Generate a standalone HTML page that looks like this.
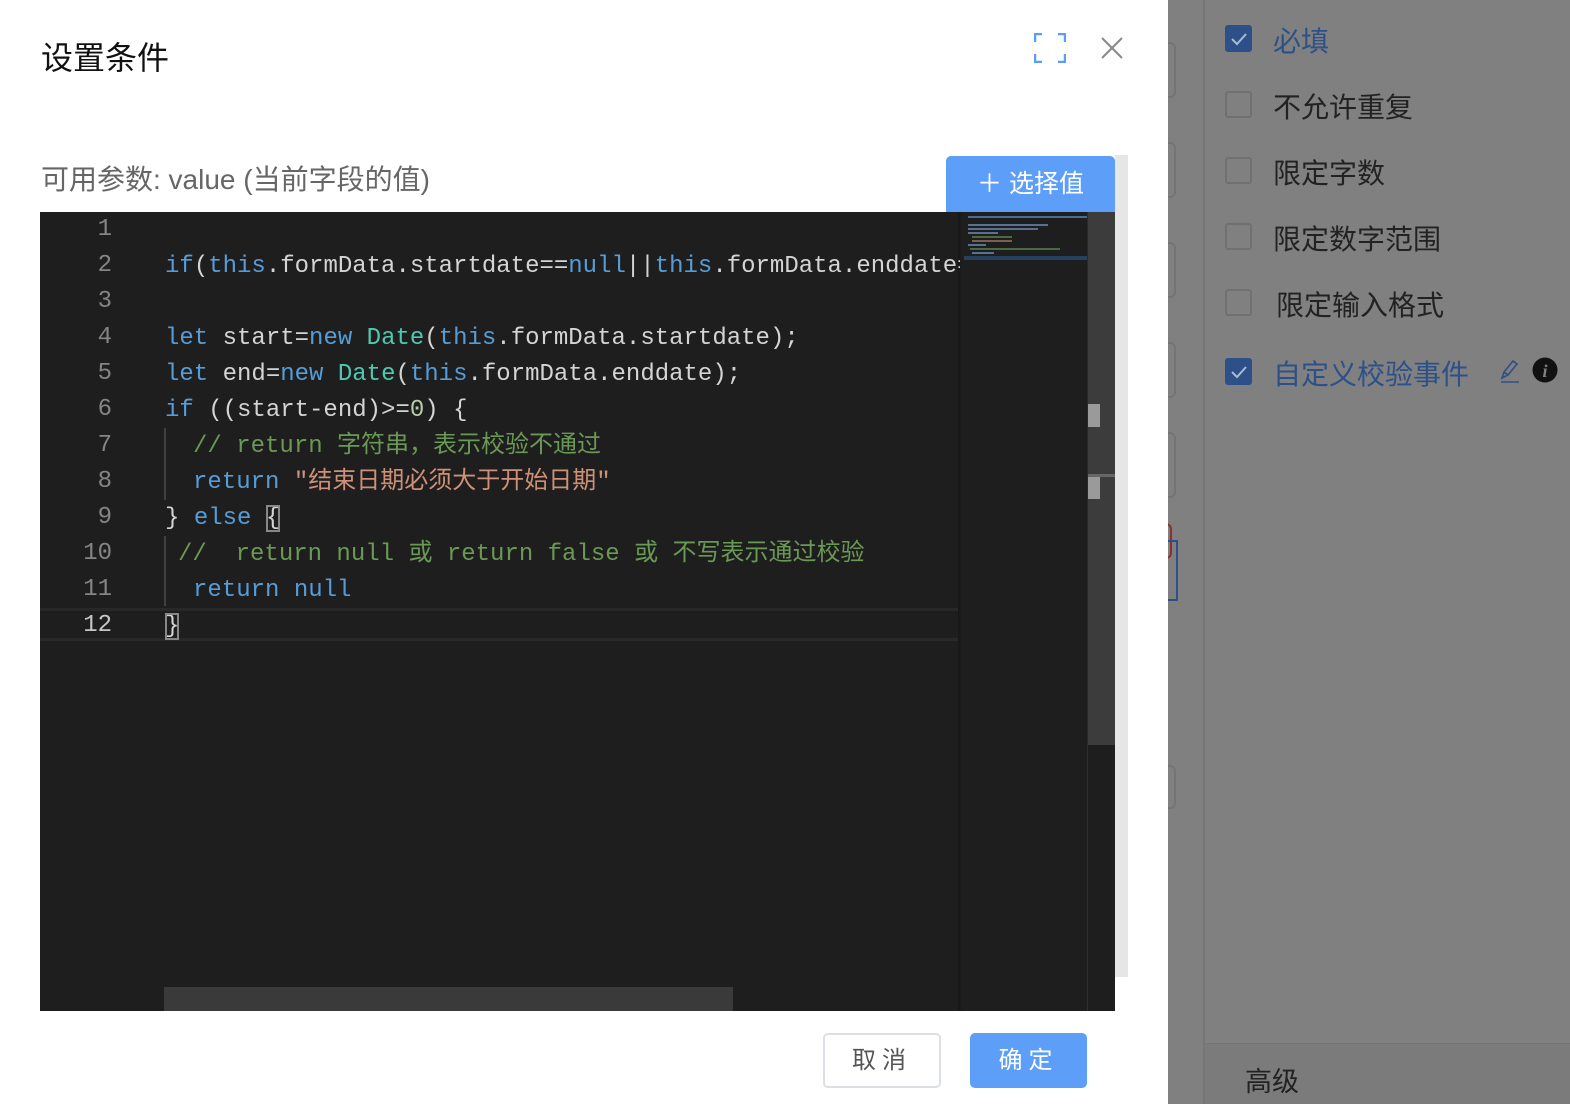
<!DOCTYPE html>
<html><head><meta charset="utf-8"><style>
*{margin:0;padding:0;box-sizing:border-box}
body{width:1570px;height:1104px;overflow:hidden;background:#fff;position:relative;font-family:"Liberation Sans","Noto Sans CJK SC",sans-serif}
.abs{position:absolute}
.code{font-family:"Liberation Mono","Noto Sans CJK SC",monospace;font-size:24px;line-height:36px;white-space:pre;color:#d4d4d4}
.ln{position:absolute;left:40px;width:72px;text-align:right;font-family:"Liberation Mono",monospace;font-size:24px;line-height:36px;color:#858585}
.kw{color:#569cd6}.ty{color:#4ec9b0}.cm{color:#6a9955}.st{color:#ce9178}.nu{color:#b5cea8}
.cb{position:absolute;left:1225px;width:27px;height:27px;border-radius:3px;border:2px solid #707070}
.cb.on{background:#2d5088;border-color:#2d5088}
.lab{position:absolute;left:1273px;font-size:28px;color:#222;font-family:"Liberation Sans","Noto Sans CJK SC",sans-serif}
.inp{position:absolute;left:-18px;width:26px;border:2px solid #747474;border-radius:6px}
</style></head><body>
<div class="abs" style="left:41px;top:33px;font-size:32px;color:#111">设置条件</div>
<svg class="abs" style="left:1034px;top:33px" width="32" height="30" viewBox="0 0 32 30" fill="none" stroke="#5a9cf8" stroke-width="2.5"><path d="M1 9V1h7M24 1h7v8M31 21v8h-7M8 29H1v-8"/></svg>
<svg class="abs" style="left:1101px;top:37px" width="22" height="22" viewBox="0 0 22 22" stroke="#888" stroke-width="2"><path d="M1 1L21 21M21 1L1 21"/></svg>
<div class="abs" style="left:41px;top:158px;font-size:28px;color:#666">可用参数: value (当前字段的值)</div>
<div class="abs" style="left:1115px;top:155px;width:13px;height:822px;background:#e6e6e6"></div>
<div class="abs" style="left:946px;top:156px;width:169px;height:56px;background:#5c9ef8;border-radius:5px 5px 0 0;color:#fff;font-size:25px;line-height:56px;text-align:center">＋ 选择值</div>
<!-- editor -->
<div class="abs" style="left:40px;top:212px;width:1075px;height:799px;background:#1e1e1e;overflow:hidden">
 <div class="abs" style="left:0;top:396px;width:920px;height:33px;border-top:3px solid #282828;border-bottom:3px solid #282828"></div>
 <div class="abs" style="left:124px;top:324px;width:2px;height:70px;background:#404040"></div>
 <div class="abs" style="left:124px;top:216px;width:2px;height:72px;background:#404040"></div>
 <div class="abs" style="left:124px;top:775px;width:569px;height:24px;background:#3a3a3a"></div>
 <div class="abs" style="left:918px;top:0;width:4px;height:799px;background:linear-gradient(90deg,#161616,#1e1e1e)"></div>
 <div class="abs" style="left:1047px;top:0;width:28px;height:533px;background:#3c3c3c;border-left:1px solid #2a2a2a"></div>
 <div class="abs" style="left:1047px;top:533px;width:1px;height:266px;background:#2e2e2e"></div>
 <div class="abs" style="left:1048px;top:192px;width:12px;height:23px;background:#9a9a9a"></div>
 <div class="abs" style="left:1048px;top:262px;width:28px;height:3px;background:#666"></div>
 <div class="abs" style="left:1048px;top:265px;width:12px;height:22px;background:#9a9a9a"></div>
 <div class="abs" style="left:928px;top:4px;width:119px;height:2px;background:#4a6a90"></div>
 <div class="abs" style="left:928px;top:12px;width:80px;height:2px;background:#5a7090"></div>
 <div class="abs" style="left:928px;top:16px;width:70px;height:2px;background:#5a7090"></div>
 <div class="abs" style="left:928px;top:20px;width:30px;height:2px;background:#5a7090"></div>
 <div class="abs" style="left:932px;top:24px;width:40px;height:2px;background:#4a6a45"></div>
 <div class="abs" style="left:932px;top:28px;width:40px;height:2px;background:#7a6050"></div>
 <div class="abs" style="left:928px;top:32px;width:18px;height:2px;background:#5a7090"></div>
 <div class="abs" style="left:930px;top:36px;width:90px;height:2px;background:#4a6a45"></div>
 <div class="abs" style="left:932px;top:40px;width:22px;height:2px;background:#5a7090"></div>
 <div class="abs" style="left:924px;top:44px;width:123px;height:4px;background:#264060"></div>
</div>
<div class="ln" style="top:212px">1</div><div class="ln" style="top:248px">2</div><div class="ln" style="top:284px">3</div><div class="ln" style="top:320px">4</div><div class="ln" style="top:356px">5</div><div class="ln" style="top:392px">6</div><div class="ln" style="top:428px">7</div><div class="ln" style="top:464px">8</div><div class="ln" style="top:500px">9</div><div class="ln" style="top:536px">10</div><div class="ln" style="top:572px">11</div><div class="ln" style="top:608px;color:#c6c6c6">12</div>
<div class="abs" style="left:165px;top:213px;width:795px;height:436px;overflow:hidden">
<div class="code abs" style="left:0;top:36px"><span class="kw">if</span>(<span class="kw">this</span>.formData.startdate==<span class="kw">null</span>||<span class="kw">this</span>.formData.enddate==<span class="kw">null</span>)</div>
<div class="code abs" style="left:0;top:108px"><span class="kw">let</span> start=<span class="kw">new</span> <span class="ty">Date</span>(<span class="kw">this</span>.formData.startdate);</div>
<div class="code abs" style="left:0;top:144px"><span class="kw">let</span> end=<span class="kw">new</span> <span class="ty">Date</span>(<span class="kw">this</span>.formData.enddate);</div>
<div class="code abs" style="left:0;top:180px"><span class="kw">if</span> ((start-end)>=<span class="nu">0</span>) {</div>
<div class="code abs" style="left:28px;top:216px"><span class="cm">// return 字符串，表示校验不通过</span></div>
<div class="code abs" style="left:28px;top:252px"><span class="kw">return</span> <span class="st">"结束日期必须大于开始日期"</span></div>
<div class="code abs" style="left:0;top:288px">} <span class="kw">else</span> <span style="outline:2px solid #888;outline-offset:-2px">{</span></div>
<div class="code abs" style="left:13px;top:324px"><span class="cm">//  return null 或 return false 或 不写表示通过校验</span></div>
<div class="code abs" style="left:28px;top:360px"><span class="kw">return</span> <span class="kw">null</span></div>
<div class="code abs" style="left:0;top:396px"><span style="outline:2px solid #888;outline-offset:-2px">}</span></div>
</div>
<div class="abs" style="left:823px;top:1033px;width:118px;height:55px;border:2px solid #dcdfe6;border-radius:5px;font-size:24px;color:#555;text-align:center;line-height:51px;letter-spacing:6px">取消</div>
<div class="abs" style="left:970px;top:1033px;width:117px;height:55px;background:#5c9ef8;border-radius:5px;font-size:24px;color:#fff;text-align:center;line-height:55px;letter-spacing:6px">确定</div>
<!-- right dimmed panel -->
<div class="abs" style="left:1168px;top:0;width:402px;height:1104px;background:#808080;overflow:hidden">
 <div class="inp" style="top:42px;height:56px"></div>
 <div class="inp" style="top:142px;height:56px"></div>
 <div class="inp" style="top:242px;height:56px"></div>
 <div class="inp" style="top:342px;height:56px"></div>
 <div class="inp" style="top:432px;height:66px"></div>
 <div class="abs" style="left:-18px;top:523px;width:22px;height:36px;border:2px solid #8a3030;border-radius:6px"></div>
 <div class="abs" style="left:-18px;top:540px;width:28px;height:61px;border:2px solid #2d5088"></div>
 <div class="inp" style="top:765px;height:44px"></div>
</div>
<div class="abs" style="left:1203px;top:0;width:2px;height:1104px;background:#767676"></div>
<div class="abs" style="left:1205px;top:1043px;width:365px;height:61px;background:#7b7b7b;border-top:1px solid #747474"></div>
<div class="abs" style="left:1245px;top:1060px;font-size:27px;color:#222">高级</div>
<div class="cb on" style="top:25px"><svg width="23" height="23" viewBox="0 0 23 23" fill="none" stroke="#aabbd0" stroke-width="2"><path d="M5 12l5 5 9-10"/></svg></div>
<div class="lab" style="top:20px;color:#2d5088">必填</div>
<div class="cb" style="top:91px"></div><div class="lab" style="top:86px">不允许重复</div>
<div class="cb" style="top:157px"></div><div class="lab" style="top:152px">限定字数</div>
<div class="cb" style="top:223px"></div><div class="lab" style="top:218px">限定数字范围</div>
<div class="cb" style="top:289px"></div><div class="lab" style="top:284px;left:1276px">限定输入格式</div>
<div class="cb on" style="top:358px"><svg width="23" height="23" viewBox="0 0 23 23" fill="none" stroke="#aabbd0" stroke-width="2"><path d="M5 12l5 5 9-10"/></svg></div>
<div class="lab" style="top:353px;color:#2d5088">自定义校验事件</div>
<svg class="abs" style="left:1498px;top:358px" width="24" height="26" viewBox="0 0 24 26" fill="none" stroke="#2d5088" stroke-width="1.6"><path d="M4 20l2-6 9-11 4 3-9 11-6 3zM6 14l4 3M3 24h18"/></svg>
<svg class="abs" style="left:1532px;top:357px" width="26" height="26" viewBox="0 0 26 26"><circle cx="13" cy="13" r="12.5" fill="#111"/><text x="13" y="20" font-family="Liberation Serif,serif" font-style="italic" font-weight="bold" font-size="18" fill="#808080" text-anchor="middle">i</text></svg>
</body></html>
